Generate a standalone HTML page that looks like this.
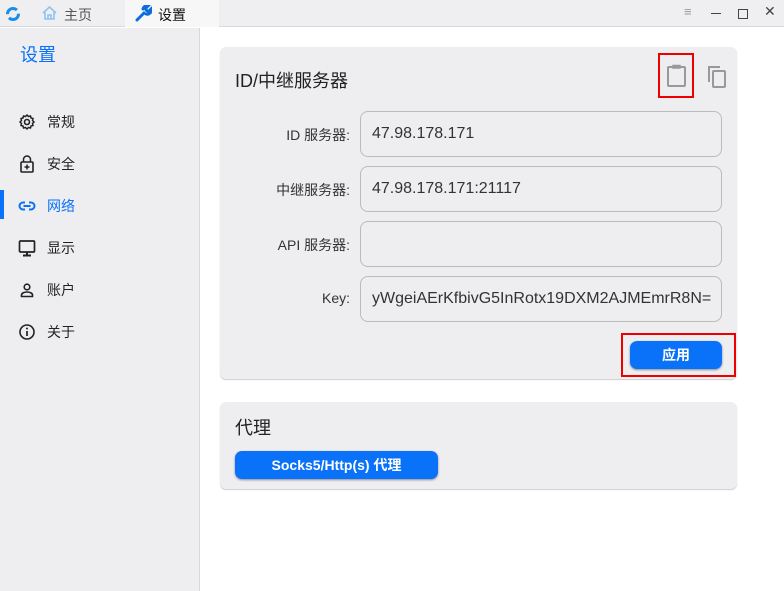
<!DOCTYPE html>
<html><head><meta charset="utf-8"><style>
*{box-sizing:border-box;margin:0;padding:0}
body{width:784px;height:591px;overflow:hidden;background:#fff;font-family:"Liberation Sans","Noto Sans CJK SC",sans-serif;position:relative;color:#222}
.abs{position:absolute}
.tabbar{left:0;top:0;width:784px;height:27px;background:#efeff1;border-bottom:1px solid #d8d8d8}
.side{left:0;top:28px;width:200px;height:563px;background:#eeeef1;border-right:1px solid #d8d8db}
.nav{left:18px;font-size:14px;color:#222;display:flex;align-items:center}
.nav svg{margin-right:11px}
.card{left:220px;width:517px;background:#eeeef1;border-radius:6px;box-shadow:0 1px 1px #ccc}
.lbl{right:434px;font-size:14px;color:#333;text-align:right}
.inp{left:360px;width:362px;height:46px;border:1px solid #bbb;border-radius:8px;font-size:16px;color:#333;padding:0 11px;line-height:44px;white-space:nowrap;overflow:hidden}
.btn{background:#0a72f8;color:#fff;border-radius:7px;font-size:14px;font-weight:bold;text-align:center;box-shadow:0 1px 2px #889}
</style></head><body>
<div class="abs tabbar"></div>
<div class="abs" style="left:125px;top:0;width:94px;height:27px;background:#f7f7f8"></div>
<svg class="abs" style="left:5px;top:6px" width="16" height="16" viewBox="0 0 16 16"><circle cx="8" cy="8" r="5.5" fill="none" stroke="#1a8ee8" stroke-width="3" stroke-dasharray="13 4"/></svg>
<svg class="abs" style="left:42px;top:6px" width="15" height="14" viewBox="0 0 15 14"><path d="M1 7L7.5 1L14 7M3 6v7h9V6M6 13V9h3v4" fill="none" stroke="#8ec3f0" stroke-width="1.6"/></svg>
<div class="abs" style="left:64px;top:5px;font-size:14px;color:#555">主页</div>
<svg class="abs" style="left:135px;top:5px" width="17" height="17" viewBox="0 0 17 17"><path d="M2 15L9 8M8 4a4 4 0 0 1 5-3l-2.5 2.5 1 2 2 1L16 4a4 4 0 0 1-5 5" fill="none" stroke="#0a6fdc" stroke-width="3" stroke-linecap="round"/></svg>
<div class="abs" style="left:158px;top:5px;font-size:14px;color:#111">设置</div>
<div class="abs" style="left:684px;top:4px;font-size:13px;color:#999">≡</div>
<div class="abs" style="left:711px;top:13px;width:10px;height:1px;background:#444"></div>
<div class="abs" style="left:738px;top:9px;width:10px;height:10px;border:1px solid #444"></div>
<div class="abs" style="left:764px;top:3px;font-size:14px;color:#444">✕</div>

<div class="abs side"></div>
<div class="abs" style="left:20px;top:41px;font-size:18px;color:#0a72f8">设置</div>
<div class="abs nav" style="top:112px"><svg width="18" height="18" viewBox="0 0 18 18"><circle cx="9" cy="9" r="2.5" fill="none" stroke="#222" stroke-width="1.6"/><path d="M9 2l1.5 1.5 2-0.5 .5 2 2 .5-.5 2L16 9l-1.5 1.5.5 2-2 .5-.5 2-2-.5L9 16l-1.5-1.5-2 .5-.5-2-2-.5.5-2L2 9l1.5-1.5-.5-2 2-.5.5-2 2 .5z" fill="none" stroke="#222" stroke-width="1.5"/></svg>常规</div>
<div class="abs nav" style="top:154px"><svg width="18" height="18" viewBox="0 0 18 18"><rect x="3" y="7" width="12" height="10" rx="1" fill="none" stroke="#222" stroke-width="1.6"/><path d="M5.5 7V4.5a3.5 3.5 0 0 1 7 0V7M9 9.5v5M6.5 12h5" fill="none" stroke="#222" stroke-width="1.5"/></svg>安全</div>
<div class="abs" style="left:0;top:190px;width:4px;height:29px;background:#0a72f8"></div>
<div class="abs nav" style="top:196px;color:#0a72f8"><svg width="18" height="18" viewBox="0 0 18 18"><path d="M7 5.5H5a3.5 3.5 0 0 0 0 7h2M11 5.5h2a3.5 3.5 0 0 1 0 7h-2M5.5 9h7" fill="none" stroke="#0a72f8" stroke-width="2"/></svg>网络</div>
<div class="abs nav" style="top:238px"><svg width="18" height="18" viewBox="0 0 18 18"><rect x="1.5" y="2" width="15" height="11" rx="1" fill="none" stroke="#222" stroke-width="1.7"/><path d="M9 13v3M5 16.5h8" stroke="#222" stroke-width="2"/></svg>显示</div>
<div class="abs nav" style="top:280px"><svg width="18" height="18" viewBox="0 0 18 18"><circle cx="9" cy="6" r="2.8" fill="none" stroke="#222" stroke-width="1.6"/><path d="M3.5 15.5v-1.5c0-2 3-3 5.5-3s5.5 1 5.5 3v1.5z" fill="none" stroke="#222" stroke-width="1.6"/></svg>账户</div>
<div class="abs nav" style="top:322px"><svg width="18" height="18" viewBox="0 0 18 18"><circle cx="9" cy="9" r="7" fill="none" stroke="#222" stroke-width="1.6"/><path d="M9 8v5" stroke="#222" stroke-width="1.7"/><circle cx="9" cy="5.5" r="1" fill="#222"/></svg>关于</div>

<div class="abs card" style="top:47px;height:332px"></div>
<div class="abs" style="left:235px;top:67px;font-size:18px;color:#222">ID/中继服务器</div>
<svg class="abs" style="left:666px;top:63px" width="22" height="24" viewBox="0 0 22 24"><rect x="2" y="4" width="17" height="19" rx="1" fill="none" stroke="#999" stroke-width="2"/><path d="M7 5V2.5h7V5z" fill="#999" stroke="#999" stroke-width="1.5"/></svg>
<div class="abs" style="left:658px;top:53px;width:36px;height:45px;border:2px solid #e00"></div>
<svg class="abs" style="left:706px;top:64px" width="22" height="24" viewBox="0 0 22 24"><path d="M3 18V3h11" fill="none" stroke="#999" stroke-width="2"/><rect x="7" y="7" width="12" height="16" rx="1" fill="none" stroke="#999" stroke-width="2"/></svg>

<div class="abs lbl" style="top:125px">ID 服务器:</div>
<div class="abs lbl" style="top:180px">中继服务器:</div>
<div class="abs lbl" style="top:235px">API 服务器:</div>
<div class="abs lbl" style="top:290px">Key:</div>
<div class="abs inp" style="top:111px">47.98.178.171</div>
<div class="abs inp" style="top:166px">47.98.178.171:21117</div>
<div class="abs inp" style="top:221px"></div>
<div class="abs inp" style="top:276px">yWgeiAErKfbivG5InRotx19DXM2AJMEmrR8N=</div>
<div class="abs btn" style="left:630px;top:341px;width:92px;height:28px;line-height:28px">应用</div>
<div class="abs" style="left:621px;top:333px;width:115px;height:44px;border:2px solid #e00"></div>

<div class="abs card" style="top:402px;height:87px"></div>
<div class="abs" style="left:235px;top:414px;font-size:18px;color:#222">代理</div>
<div class="abs btn" style="left:235px;top:451px;width:203px;height:28px;line-height:28px">Socks5/Http(s) 代理</div>
</body></html>
